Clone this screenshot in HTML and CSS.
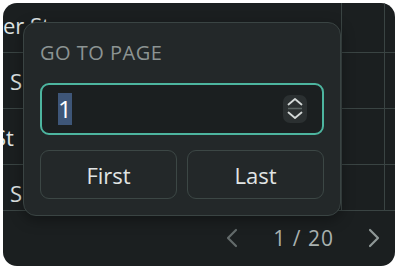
FILE: index.html
```html
<!DOCTYPE html>
<html>
<head>
<meta charset="utf-8">
<link rel="stylesheet" href="styles.css">
</head>
<body>
<div class="card">
  <div class="viewport">
    <div class="grid">
      <div class="cell name"><span class="t1">er St</span></div><div class="cell"></div><div class="cell"></div>
      <div class="cell name"><span class="t2">S</span></div><div class="cell"></div><div class="cell"></div>
      <div class="cell name"><span class="t3">St</span></div><div class="cell"></div><div class="cell"></div>
      <div class="cell name"><span class="t4">S</span></div><div class="cell"></div><div class="cell"></div>
    </div>
  </div>
  <div class="pager">
    <span class="chev prev"><svg width="12" height="20" viewBox="0 0 12 20"><path d="M10 2 L2 10 L10 18" fill="none" stroke="currentColor" stroke-width="2.2" stroke-linecap="round" stroke-linejoin="round"/></svg></span>
    <span class="count">1 / 20</span>
    <span class="chev next"><svg width="12" height="20" viewBox="0 0 12 20"><path d="M2 2 L10 10 L2 18" fill="none" stroke="currentColor" stroke-width="2.2" stroke-linecap="round" stroke-linejoin="round"/></svg></span>
  </div>

  <div class="popover">
    <div class="label">GO TO PAGE</div>
    <div class="input">
      <span class="value"><span class="sel">1</span></span>
      <span class="spin">
        <svg width="24" height="28" viewBox="0 0 24 28">
          <path d="M5.5 9.5 L12 4 L18.5 9.5" fill="none" stroke="#d3d8d7" stroke-width="1.8" stroke-linecap="round" stroke-linejoin="round"/>
          <path d="M5 13.5 H19" stroke="#5b6463" stroke-width="1.5"/>
          <path d="M5.5 17.5 L12 23 L18.5 17.5" fill="none" stroke="#d3d8d7" stroke-width="1.8" stroke-linecap="round" stroke-linejoin="round"/>
        </svg>
      </span>
    </div>
    <div class="buttons">
      <div class="btn">First</div>
      <div class="btn">Last</div>
    </div>
  </div>
</div>
</body>
</html>
```

FILE: styles.css
```css
html, body {
  margin: 0;
  padding: 0;
  background: #ffffff;
}
body {
  font-family: "Open Sans", "Noto Sans", sans-serif;
  width: 400px;
  height: 271px;
  overflow: hidden;
}
.card {
  margin: 3px 0 0 3px;
  width: 392px;
  height: 263px;
  border-radius: 14px;
  background: #1b1f20;
  overflow: hidden;
  position: relative;
  display: flex;
  flex-direction: column;
}
.viewport {
  height: 207px;
  border-bottom: 1px solid #3a4443;
  overflow: hidden;
  flex: none;
}
.grid {
  margin-top: -6px;
  display: grid;
  grid-template-columns: 339px 43px 20px;
  grid-auto-rows: 56px;
}
.cell {
  border-right: 1px solid #3a4443;
  border-bottom: 1px solid #3a4443;
  display: flex;
  align-items: center;
  color: #dfe3e2;
  font-size: 22px;
  overflow: hidden;
  white-space: nowrap;
}
.name span { display: block; }
.t1 { margin-left: 0; }
.t2 { margin-left: 7px; }
.t3 { margin-left: -9px; }
.t4 { margin-left: 7px; }

.pager {
  flex: 1;
  display: flex;
  align-items: center;
  justify-content: flex-end;
  padding-right: 15px;
  padding-bottom: 2px;
  color: #a9b1b0;
}
.count {
  font-size: 21px;
  letter-spacing: 1px;
  margin: 0 34px 0 35px;
}
.chev { display: flex; }
.prev { color: #636b6b; }
.next { color: #8f9897; }

.popover {
  position: absolute;
  left: 20px;
  top: 19px;
  width: 284px;
  padding: 16px;
  background: #232829;
  border: 1px solid #3a4443;
  border-radius: 13px;
  box-shadow: 0 4px 14px rgba(0,0,0,0.35);
}
.label {
  color: #8c9493;
  font-size: 20px;
  letter-spacing: 0.5px;
  line-height: 24px;
  margin-top: 2px;
}
.input {
  margin-top: 18px;
  height: 48px;
  border: 2px solid #4db59f;
  border-radius: 9px;
  background: #1b1f20;
  display: flex;
  align-items: center;
  justify-content: space-between;
  padding: 0 15px 0 16px;
}
.value {
  font-size: 24px;
  color: #ffffff;
  line-height: 32px;
  display: flex;
}
.sel {
  background: #3e5678;
  padding: 0;
}
.spin {
  width: 24px;
  height: 28px;
  background: #2b3031;
  border-radius: 7px;
  display: flex;
}
.buttons {
  margin-top: 15px;
  display: flex;
  gap: 10px;
}
.btn {
  flex: 1;
  height: 47px;
  border: 1px solid #3c4745;
  border-radius: 9px;
  display: flex;
  align-items: center;
  justify-content: center;
  color: #e1e5e4;
  font-size: 22px;
}
```
